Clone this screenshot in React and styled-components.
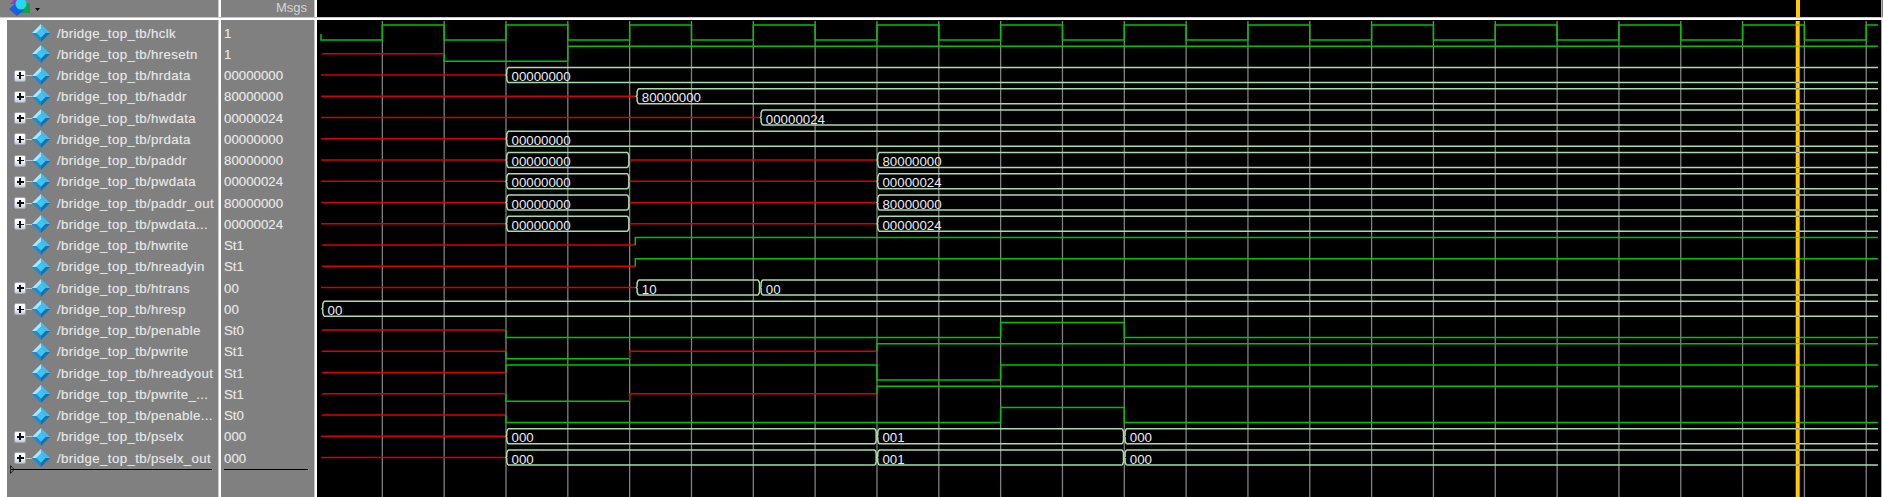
import styled, { createGlobalStyle } from 'styled-components';

const ROW_H = 21.25;
const FIRST_TOP = 25;
const WAVE_H = 15;
const GRID_X0 = 320.5;
const GRID_STEP = 61.83;
const WAVE_END = 1878;
const CURSOR_X = 1797.7;

const tick = (k) => GRID_X0 + GRID_STEP * k;
const START = 321;
const T3 = tick(3);
const T5 = tick(5);
const T9 = tick(9);
const T11 = tick(11);
const T13 = tick(13);
const HADDR_X = 636.3;
const HWDATA_X = 760.3;

// each signal: name, msgs value, and the segments of its wave
const signals = [
  { name: 'hclk', value: '1', clock: true },
  { name: 'hresetn', value: '1', bits: [['x', START + 1], ['0', tick(2)], ['1', tick(4)]] },
  { name: 'hrdata', value: '00000000', bus: [['x', START], ['00000000', T3]] },
  { name: 'haddr', value: '80000000', bus: [['x', START], ['80000000', HADDR_X]] },
  { name: 'hwdata', value: '00000024', bus: [['x', START], ['00000024', HWDATA_X]] },
  { name: 'prdata', value: '00000000', bus: [['x', START], ['00000000', T3]] },
  { name: 'paddr', value: '80000000', bus: [['x', START], ['00000000', T3], ['x', T5], ['80000000', T9]] },
  { name: 'pwdata', value: '00000024', bus: [['x', START], ['00000000', T3], ['x', T5], ['00000024', T9]] },
  { name: 'paddr_out', value: '80000000', bus: [['x', START], ['00000000', T3], ['x', T5], ['80000000', T9]] },
  { name: 'pwdata...', value: '00000024', bus: [['x', START], ['00000000', T3], ['x', T5], ['00000024', T9]] },
  { name: 'hwrite', value: 'St1', bits: [['x', START + 1], ['1', HADDR_X - 1]] },
  { name: 'hreadyin', value: 'St1', bits: [['x', START + 1], ['1', HADDR_X - 1]] },
  { name: 'htrans', value: '00', bus: [['x', START], ['10', HADDR_X], ['00', HWDATA_X]] },
  { name: 'hresp', value: '00', bus: [['00', START + 1]] },
  { name: 'penable', value: 'St0', bits: [['x', START + 1], ['0', T3], ['1', T11], ['0', T13]] },
  { name: 'pwrite', value: 'St1', bits: [['x', START + 1], ['0', T3], ['x', T5], ['1', T9]] },
  { name: 'hreadyout', value: 'St1', bits: [['x', START + 1], ['1', T3], ['0', T9], ['1', T11]] },
  { name: 'pwrite_...', value: 'St1', bits: [['x', START + 1], ['0', T3], ['x', T5], ['1', T9]] },
  { name: 'penable...', value: 'St0', bits: [['x', START + 1], ['0', T3], ['1', T11], ['0', T13]] },
  { name: 'pselx', value: '000', bus: [['x', START], ['000', T3], ['001', T9], ['000', T13]] },
  { name: 'pselx_out', value: '000', bus: [['x', START], ['000', T3], ['001', T9], ['000', T13]] },
];

const GlobalStyle = createGlobalStyle`
  html, body {
    margin: 0;
    padding: 0;
    background: #fff;
  }
  body {
    font-family: "Liberation Sans", Arial, sans-serif;
  }
`;

const Window = styled.div`
  width: 1883px;
  height: 497px;
  overflow: hidden;
  display: flex;
  flex-direction: column;
  background: #fff;
`;

const Header = styled.header`
  display: flex;
  height: 17px;
  background: #808080;
  flex: none;
`;

const ToolCell = styled.div`
  width: 218px;
  flex: none;
  display: flex;
  align-items: flex-start;
  padding-left: 9px;
  box-sizing: border-box;
`;

const MsgsCell = styled.div`
  width: 93px;
  flex: none;
  box-sizing: border-box;
  padding-right: 7px;
  text-align: right;
  font-size: 13px;
  line-height: 15px;
  color: #d4d4d4;
`;

const WaveHead = styled.div`
  position: relative;
  flex: 1;
  background: #000;
  margin-right: 1px;
  border-right: 1px solid #b0b0b0;
`;

const HeadCursor = styled.div`
  position: absolute;
  top: 0;
  bottom: 0;
  left: ${CURSOR_X - 2 - 317}px;
  width: 4px;
  background: #ffcc00;
`;

const HeaderRule = styled.div`
  height: 3px;
  flex: none;
  background: #fff;
  border-top: 1px solid #c8c8c8;
  box-sizing: border-box;
`;

const Body = styled.div`
  flex: 1;
  display: flex;
  min-height: 0;
`;

const Divider = styled.div`
  width: 3px;
  flex: none;
  background: #fff;
  border-left: 1px solid #c8c8c8;
  box-sizing: border-box;
`;

const Column = styled.div`
  position: relative;
  flex: none;
  width: ${(p) => p.$width}px;
  margin-left: ${(p) => p.$gutter || 0}px;
  padding-top: 2.5px;
  box-sizing: border-box;
  background: #808080;
`;

const NameRow = styled.div`
  height: ${ROW_H}px;
  display: grid;
  grid-template-columns: 12px 6px 18px 1fr;
  align-items: center;
  padding-left: 7px;
  font-size: 13.3px;
  letter-spacing: 0.35px;
  color: #e6e6e6;
  text-shadow: 0 0 1px rgba(255, 255, 255, 0.35);
  white-space: nowrap;
`;

const Expander = styled.span`
  width: 12px;
  height: 12px;
  box-sizing: border-box;
  background: linear-gradient(#fff, #f2f2f6 60%, #c4cbda);
  border: 1px solid #a4a8b2;
  border-radius: 2px;
  position: relative;
  &::before,
  &::after {
    content: '';
    position: absolute;
    background: #111;
  }
  &::before {
    left: 1.5px;
    right: 1.5px;
    top: 4.25px;
    height: 1.5px;
  }
  &::after {
    top: 1.5px;
    bottom: 1.5px;
    left: 4.25px;
    width: 1.5px;
  }
`;

const Connector = styled.span`
  height: 1px;
  background: #c4c4c4;
`;

const DiamondWrap = styled.span`
  grid-column: 3;
  display: flex;
  width: 18px;
  height: 18px;
`;

const SignalName = styled.span`
  padding-left: 7px;
`;

const ValueRow = styled.div`
  height: ${ROW_H}px;
  line-height: ${ROW_H}px;
  padding-left: 3px;
  font-size: 13.3px;
  color: #e6e6e6;
  text-shadow: 0 0 1px rgba(255, 255, 255, 0.35);
  white-space: nowrap;
`;

const EndRule = styled.div`
  position: absolute;
  top: 448.5px;
  left: ${(p) => p.$left}px;
  right: ${(p) => p.$right}px;
  height: 1.5px;
  background: #000;
`;

const EndMark = styled.svg`
  position: absolute;
  top: 445px;
  left: 3px;
`;

const WavePane = styled.div`
  flex: 1;
  background: #000;
  margin-right: 1px;
  border-right: 1px solid #b0b0b0;
  display: flex;
`;

const WaveSvg = styled.svg`
  display: block;
`;

const ValueText = styled.text`
  font-family: "Liberation Sans", Arial, sans-serif;
  font-size: 13.3px;
  fill: #e8ecf8;
`;

const Diamond = () => (
  <DiamondWrap>
    <svg width="18" height="18" viewBox="0 0 18 18">
      <polygon points="9,0 18,9 9,18 0,9" fill="#2d9bd8" />
      <polygon points="9,0 18,9 13.5,9 9,4.5" fill="#49b9ec" />
      <polygon points="9,0 9,4.5 4.5,9 0,9" fill="#a8e8fc" />
      <polygon points="18,9 9,18 9,13.5 13.5,9" fill="#1470b0" />
      <polygon points="0,9 9,18 9,13.5 4.5,9" fill="#2288c8" />
      <polygon points="9,4.5 13.5,9 9,13.5 4.5,9" fill="#3cc4f6" />
    </svg>
  </DiamondWrap>
);

const ToolIcon = () => (
  <svg width="34" height="17" viewBox="0 0 34 17">
    <polygon points="1,4 5,0 11,0 8,4" fill="#a033c8" />
    <rect x="11" y="3" width="10" height="10" fill="#18a048" />
    <polygon points="7,3 15,10 8,16 0,9" fill="#1560e0" />
    <circle cx="12" cy="4" r="5.5" fill="#25d8ee" />
    <polygon points="26,8 31,8 28.5,11" fill="#000" />
  </svg>
);

// one bit signal as a stepped polyline, one path per colour
function bitPaths(segments, top) {
  const levelY = { 1: top, 0: top + WAVE_H, x: top + WAVE_H / 2 };
  return segments.map(([level, from], i) => {
    const to = i < segments.length - 1 ? segments[i + 1][1] : WAVE_END;
    const y = levelY[level];
    const prev = i > 0 ? levelY[segments[i - 1][0]] : y;
    return {
      key: i,
      color: level === 'x' ? '#e00000' : '#00c400',
      d: `M${from} ${prev}L${from} ${y}L${to} ${y}`,
    };
  });
}

function clockPath(top) {
  let d = `M${START} ${top + 9}L${START} ${top + WAVE_H}`;
  let high = false;
  for (let k = 1; k <= 25; k++) {
    const x = tick(k);
    d += `L${x} ${high ? top : top + WAVE_H}`;
    high = !high;
    d += `L${x} ${high ? top : top + WAVE_H}`;
  }
  d += `L${WAVE_END} ${high ? top : top + WAVE_H}`;
  return d;
}

function BusRow({ segments, top }) {
  const mid = top + WAVE_H / 2;
  const bottom = top + WAVE_H;
  return segments.map(([value, from], i) => {
    const last = i === segments.length - 1;
    const to = last ? WAVE_END : segments[i + 1][1];
    if (value === 'x') {
      return (
        <path key={i} d={`M${from} ${mid}L${to} ${mid}`} stroke="#d80000" strokeWidth="1.3" fill="none" />
      );
    }
    const bracket = `M${from + 2} ${top}L${from + 0.8} ${top + 3}L${from + 0.8} ${mid - 1}L${from} ${mid}L${from + 0.8} ${mid + 1}L${from + 0.8} ${bottom - 3}L${from + 2} ${bottom}`;
    const closing = last
      ? ''
      : `M${to - 2} ${top}L${to - 0.8} ${top + 3}L${to - 0.8} ${bottom - 3}L${to - 2} ${bottom}`;
    return (
      <g key={i}>
        <path
          d={`${bracket}M${from + 2} ${top}L${last ? to : to - 2} ${top}M${from + 2} ${bottom}L${last ? to : to - 2} ${bottom}${closing}`}
          stroke="#a8dca8"
          strokeWidth="1.5"
          fill="none"
        />
        <ValueText x={from + 5.5} y={bottom - 1.5}>
          {value}
        </ValueText>
      </g>
    );
  });
}

// the small coloured notches where a signal crosses the cursor
function cursorNotches() {
  const notches = [];
  signals.forEach((signal, row) => {
    const top = FIRST_TOP + row * ROW_H;
    if (signal.bus) {
      notches.push({ y: top, color: '#6464d8' }, { y: top + WAVE_H, color: '#6464d8' });
    } else if (signal.clock) {
      notches.push({ y: top, color: '#ff5a00' });
    } else {
      const level = signal.bits[signal.bits.length - 1][0];
      notches.push({ y: level === '1' ? top : top + WAVE_H, color: '#ff5a00' });
    }
  });
  return notches;
}

function Waves() {
  const gridLines = [];
  for (let k = 1; k <= 25; k++) gridLines.push(tick(k));
  return (
    <WaveSvg width="1564" height="477" viewBox="317 20 1564 477">
      {gridLines.map((x) => (
        <path key={x} d={`M${x} 21V497`} stroke="#808080" strokeWidth="1.3" />
      ))}
      {signals.map((signal, row) => {
        const top = FIRST_TOP + row * ROW_H;
        if (signal.clock) {
          return <path key={signal.name} d={clockPath(top)} stroke="#00c400" strokeWidth="1.5" fill="none" />;
        }
        if (signal.bus) {
          return <BusRow key={signal.name} segments={signal.bus} top={top} />;
        }
        return bitPaths(signal.bits, top).map((p) => (
          <path key={`${signal.name}${p.key}`} d={p.d} stroke={p.color} strokeWidth="1.4" fill="none" />
        ));
      })}
      <rect x={CURSOR_X - 2} y="21" width="4" height="476" fill="#ffcc00" />
      {cursorNotches().map((n) => (
        <rect key={n.y} x={CURSOR_X - 1.5} y={n.y - 0.5} width="3" height="1" fill={n.color} />
      ))}
    </WaveSvg>
  );
}

function App() {
  return (
    <Window>
      <GlobalStyle />
      <Header>
        <ToolCell>
          <ToolIcon />
        </ToolCell>
        <Divider />
        <MsgsCell>Msgs</MsgsCell>
        <Divider />
        <WaveHead>
          <HeadCursor />
        </WaveHead>
      </Header>
      <HeaderRule />
      <Body>
        <Column $width={211} $gutter={7}>
          {signals.map((signal) => (
            <NameRow key={signal.name}>
              {signal.bus && <Expander />}
              {signal.bus && <Connector />}
              <Diamond />
              <SignalName>/bridge_top_tb/{signal.name}</SignalName>
            </NameRow>
          ))}
          <EndMark width="5" height="9" viewBox="0 0 5 9">
            <polygon points="0.5,0.5 4,4.5 0.5,8.5" fill="none" stroke="#222" />
          </EndMark>
          <EndRule $left={4} $right={6} />
        </Column>
        <Divider />
        <Column $width={93}>
          {signals.map((signal) => (
            <ValueRow key={signal.name}>{signal.value}</ValueRow>
          ))}
          <EndRule $left={3} $right={6} />
        </Column>
        <Divider />
        <WavePane>
          <Waves />
        </WavePane>
      </Body>
    </Window>
  );
}

export default App;
